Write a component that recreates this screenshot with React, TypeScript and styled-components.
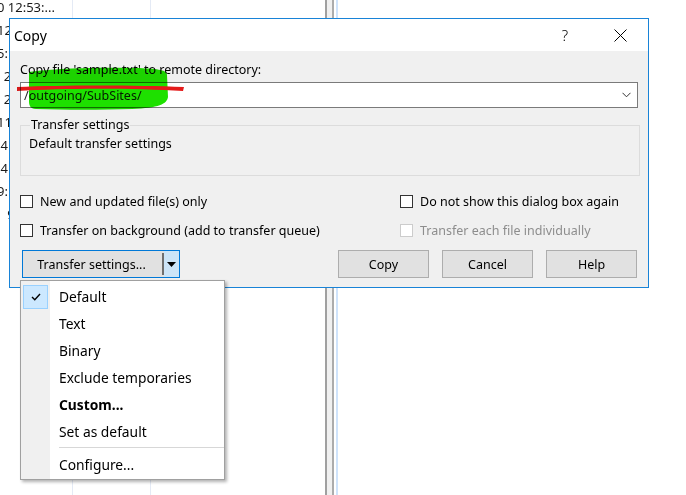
import React from 'react';
import styled, { createGlobalStyle } from 'styled-components';

const GlobalStyle = createGlobalStyle`
  html, body {
    margin: 0;
    padding: 0;
    background: #fff;
  }
  body {
    font-family: 'Noto Sans', 'Liberation Sans', sans-serif;
    font-size: 12.5px;
    color: #000;
  }
`;

// Background window (file panel behind the dialog)

const Desktop = styled.div`
  position: relative;
  width: 686px;
  height: 495px;
  overflow: hidden;
  background: #fff;
  display: flex;
`;

const FilePane = styled.div`
  width: 325px;
  display: flex;
  flex-direction: column;
  margin-top: -4px;
  font-size: 13px;
`;

const FileRow = styled.div`
  display: grid;
  grid-template-columns: 73px 78px 1fr;
  height: 23px;
  flex-shrink: 0;
`;

const FileCell = styled.div`
  border-right: 1px solid #e4eaf5;
  white-space: nowrap;
  overflow: hidden;
  line-height: 23px;
  text-indent: -3px;
  color: #1a1a1a;

  &:last-child {
    border-right: none;
  }
`;

const FileFill = styled.div`
  flex: 1;
  display: grid;
  grid-template-columns: 73px 78px 1fr;
`;

const Splitter = styled.div`
  width: 13px;
  box-sizing: border-box;
  display: flex;
`;

const SplitterBar = styled.div`
  width: 9px;
  box-sizing: border-box;
  background: #f0f0f0;
  border-left: 2px solid #a0a0a0;
  border-right: 2px solid #acacac;
`;

const SplitterEdge = styled.div`
  width: 2px;
  margin-left: 2px;
  background: #cfe3fb;
`;

const RightPane = styled.div`
  flex: 1;
  background: #fff;
`;

// Dialog

const Dialog = styled.div`
  position: absolute;
  left: 9px;
  top: 18px;
  width: 640px;
  height: 270px;
  box-sizing: border-box;
  border: 1px solid #1883d7;
  background: #f0f0f0;
  display: flex;
  flex-direction: column;
`;

const TitleBar = styled.div`
  height: 32px;
  background: #fff;
  display: flex;
  align-items: center;
  padding-left: 4px;
`;

const Title = styled.div`
  font-size: 14px;
  flex: 1;
`;

const CaptionButton = styled.div<{ $gap?: number }>`
  width: 46px;
  height: 32px;
  display: flex;
  align-items: center;
  justify-content: center;
  margin-right: ${(p) => p.$gap ?? 0}px;
  font-size: 15px;
  font-weight: 300;
`;

const Body = styled.div`
  flex: 1;
  display: flex;
  flex-direction: column;
  padding: 0 10px 7px 10px;
`;

const Label = styled.div`
  margin-top: 11px;
  line-height: 16px;
`;

const ComboWrap = styled.div`
  position: relative;
  margin-top: 4px;
`;

const Combo = styled.div`
  height: 26px;
  box-sizing: border-box;
  border: 1px solid #7a7a7a;
  background: #fff;
  display: flex;
  align-items: center;
  padding: 0 6px 0 3px;
`;

const ComboText = styled.div`
  flex: 1;
  color: #222;
`;

const Scribble = styled.svg`
  position: absolute;
  left: -6px;
  top: -16px;
  mix-blend-mode: multiply;
  pointer-events: none;
`;

const GroupBox = styled.fieldset`
  margin: 10px -2px 0 0;
  height: 58px;
  box-sizing: border-box;
  border: 1px solid #dcdcdc;
  padding: 0 0 0 8px;
  min-width: 0;
`;

const Legend = styled.legend`
  padding: 0 1px;
  margin-left: 1px;
  line-height: 14px;
`;

const GroupText = styled.div`
  line-height: 16px;
  margin-top: 4px;
`;

const Options = styled.div`
  margin-top: 15px;
  display: grid;
  grid-template-columns: 380px 1fr;
  row-gap: 9px;
`;

const Option = styled.label<{ $disabled?: boolean }>`
  display: flex;
  align-items: center;
  height: 20px;
  color: ${(p) => (p.$disabled ? '#8d8d8d' : '#000')};
`;

const Box = styled.span<{ $disabled?: boolean }>`
  width: 13px;
  height: 13px;
  box-sizing: border-box;
  border: 1px solid ${(p) => (p.$disabled ? '#cccccc' : '#333333')};
  background: #fff;
  margin-right: 7px;
  flex-shrink: 0;
`;

const ButtonRow = styled.div`
  margin-top: 10px;
  display: flex;
  align-items: center;
  padding-right: 1px;
`;

const SplitButton = styled.div`
  margin-left: 2px;
  width: 158px;
  height: 28px;
  box-sizing: border-box;
  border: 1px solid #0078d7;
  display: flex;
  background: #e1e1e1;
`;

const SplitMain = styled.div`
  flex: 1;
  display: flex;
  align-items: center;
  justify-content: center;
  padding-right: 2px;
  border-right: 2px solid #6f6f6f;
  margin: 2px 0;
`;

const SplitArrow = styled.div`
  width: 15px;
  background: #cce4f7;
  display: flex;
  align-items: center;
  justify-content: center;
`;

const Button = styled.div`
  width: 91px;
  height: 28px;
  box-sizing: border-box;
  border: 1px solid #adadad;
  background: #e1e1e1;
  display: flex;
  align-items: center;
  justify-content: center;
`;

const ButtonGroup = styled.div`
  margin-left: auto;
  display: flex;
  gap: 13px;
`;

// Drop-down menu

const Menu = styled.div`
  position: absolute;
  left: 20px;
  top: 280px;
  width: 205px;
  height: 200px;
  box-sizing: border-box;
  border: 1px solid #a0a0a0;
  background: linear-gradient(to right, #f0f0f0 0 29px, #fff 29px);
  box-shadow: 2px 2px 3px rgba(0, 0, 0, 0.3);
  padding-top: 2px;
  font-size: 13.8px;
`;

const MenuItem = styled.div<{ $bold?: boolean }>`
  height: 27px;
  display: flex;
  align-items: center;
  font-weight: ${(p) => (p.$bold ? 700 : 400)};
`;

const Gutter = styled.div`
  width: 29px;
  height: 100%;
  display: flex;
  align-items: center;
  padding-left: 2px;
  box-sizing: border-box;
  margin-right: 9px;
`;

const CheckMark = styled.div`
  width: 25px;
  height: 24px;
  box-sizing: border-box;
  background: #cce8ff;
  border: 1px solid #99d1ff;
  display: flex;
  align-items: center;
  justify-content: center;
`;

const Separator = styled.div`
  margin: 2px 0 2px 38px;
  height: 1px;
  background: #d7d7d7;
  border-bottom: 1px solid #fff;
`;

const rows = [
  '0  12:53:...',
  '12',
  '5:',
  '\u00a0\u00a02',
  '\u00a0\u00a02',
  '11',
  '\u00a04',
  '\u00a04',
  '9:',
  '\u00a0\u00a0\u00a09',
  '',
  '',
  '',
  '',
  '',
  '',
  '',
  '',
  '',
  '',
  '',
  '',
];

const menuItems: { label: string; bold?: boolean; checked?: boolean }[] = [
  { label: 'Default', checked: true },
  { label: 'Text' },
  { label: 'Binary' },
  { label: 'Exclude temporaries' },
  { label: 'Custom...', bold: true },
  { label: 'Set as default' },
];

const App: React.FC = () => {
  return (
    <>
      <GlobalStyle />
      <Desktop>
        <FilePane>
          {rows.map((r, i) => (
            <FileRow key={i}>
              <FileCell>{r}</FileCell>
              <FileCell />
              <FileCell />
            </FileRow>
          ))}
          <FileFill>
            <FileCell />
            <FileCell />
            <FileCell />
          </FileFill>
        </FilePane>
        <Splitter>
          <SplitterBar />
          <SplitterEdge />
        </Splitter>
        <RightPane />

        <Dialog>
          <TitleBar>
            <Title>Copy</Title>
            <CaptionButton $gap={9}>?</CaptionButton>
            <CaptionButton $gap={5}>
              <svg width="13" height="13" viewBox="0 0 13 13">
                <path d="M0.5 0.5 L12.5 12.5 M12.5 0.5 L0.5 12.5" stroke="#000" strokeWidth="1" />
              </svg>
            </CaptionButton>
          </TitleBar>
          <Body>
            <Label>Copy file 'sample.txt' to remote directory:</Label>
            <ComboWrap>
              <Combo>
                <ComboText>/outgoing/SubSites/</ComboText>
                <svg width="9" height="6" viewBox="0 0 9 6">
                  <path d="M0.5 0.8 L4.5 4.8 L8.5 0.8" fill="none" stroke="#333" strokeWidth="1" />
                </svg>
              </Combo>
              <Scribble width="200" height="50" viewBox="0 0 200 50">
                <path
                  d="M15 6 C40 2, 90 1, 125 2 C145 3, 153 4, 153 9 L154 31 C153 38, 145 42, 118 43 C88 44, 50 44, 22 43 C16 43, 15 39, 15 35 Z"
                  fill="#1ee000"
                />
                <path
                  d="M3 21 C50 19, 120 19, 170 21 L169 25 C120 22, 50 22, 3 25 Z"
                  fill="#e41a1a"
                />
              </Scribble>
            </ComboWrap>
            <GroupBox>
              <Legend>Transfer settings</Legend>
              <GroupText>Default transfer settings</GroupText>
            </GroupBox>
            <Options>
              <Option>
                <Box />
                New and updated file(s) only
              </Option>
              <Option>
                <Box />
                Do not show this dialog box again
              </Option>
              <Option>
                <Box />
                Transfer on background (add to transfer queue)
              </Option>
              <Option $disabled>
                <Box $disabled />
                Transfer each file individually
              </Option>
            </Options>
            <ButtonRow>
              <SplitButton>
                <SplitMain>Transfer settings...</SplitMain>
                <SplitArrow>
                  <svg width="9" height="5" viewBox="0 0 9 5">
                    <path d="M0 0 L9 0 L4.5 5 Z" fill="#000" />
                  </svg>
                </SplitArrow>
              </SplitButton>
              <ButtonGroup>
                <Button>Copy</Button>
                <Button>Cancel</Button>
                <Button>Help</Button>
              </ButtonGroup>
            </ButtonRow>
          </Body>
        </Dialog>

        <Menu>
          {menuItems.map((m) => (
            <MenuItem key={m.label} $bold={m.bold}>
              <Gutter>
                {m.checked && (
                  <CheckMark>
                    <svg width="10" height="8" viewBox="0 0 10 8">
                      <path d="M1 4 L3.8 6.8 L9 1" fill="none" stroke="#000" strokeWidth="1.4" />
                    </svg>
                  </CheckMark>
                )}
              </Gutter>
              {m.label}
            </MenuItem>
          ))}
          <Separator />
          <MenuItem>
            <Gutter />
            Configure...
          </MenuItem>
        </Menu>
      </Desktop>
    </>
  );
};

export default App;
